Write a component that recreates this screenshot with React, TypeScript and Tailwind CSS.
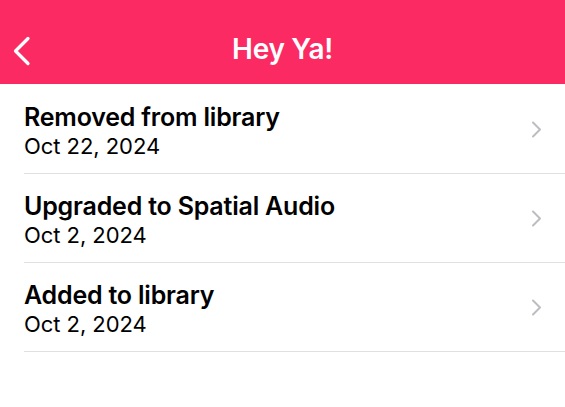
const events = [
  { title: "Removed from library", date: "Oct 22, 2024" },
  { title: "Upgraded to Spatial Audio", date: "Oct 2, 2024" },
  { title: "Added to library", date: "Oct 2, 2024" },
];

function BackChevron() {
  return (
    <svg width="20" height="30" viewBox="0 0 20 30" fill="none">
      <path
        d="M16 2.5 L3.5 15 L16 27.5"
        stroke="white"
        strokeWidth="3.2"
        strokeLinecap="round"
        strokeLinejoin="round"
      />
    </svg>
  );
}

function RowChevron() {
  return (
    <svg width="12" height="17" viewBox="0 0 12 17" fill="none">
      <path
        d="M2 1.5 L9 8.5 L2 15.5"
        stroke="#bdbdc1"
        strokeWidth="2"
        strokeLinecap="round"
        strokeLinejoin="round"
      />
    </svg>
  );
}

export default function App() {
  return (
    <div className="min-h-[407px] w-[565px] bg-white font-['Inter',sans-serif] text-black">
      <header className="relative flex h-[84px] items-center justify-center bg-[#fc2a63]">
        <button className="absolute left-[12px] top-[36px]">
          <BackChevron />
        </button>
        <h1 className="pt-[14px] text-[28px] font-semibold tracking-[-0.3px] text-white">Hey Ya!</h1>
      </header>

      <ul className="pl-6 pt-[1px]">
        {events.map((e) => (
          <li
            key={e.title}
            className="flex h-[89px] items-center border-b border-[#e0e0e0] pr-[22px]"
          >
            <div className="flex flex-1 flex-col pt-[4px]">
              <span className="text-[25px] leading-[30px] font-semibold tracking-[-0.2px]">{e.title}</span>
              <span className="text-[22px] leading-[28px] tracking-[-0.05px]">{e.date}</span>
            </div>
            <RowChevron />
          </li>
        ))}
      </ul>
    </div>
  );
}
